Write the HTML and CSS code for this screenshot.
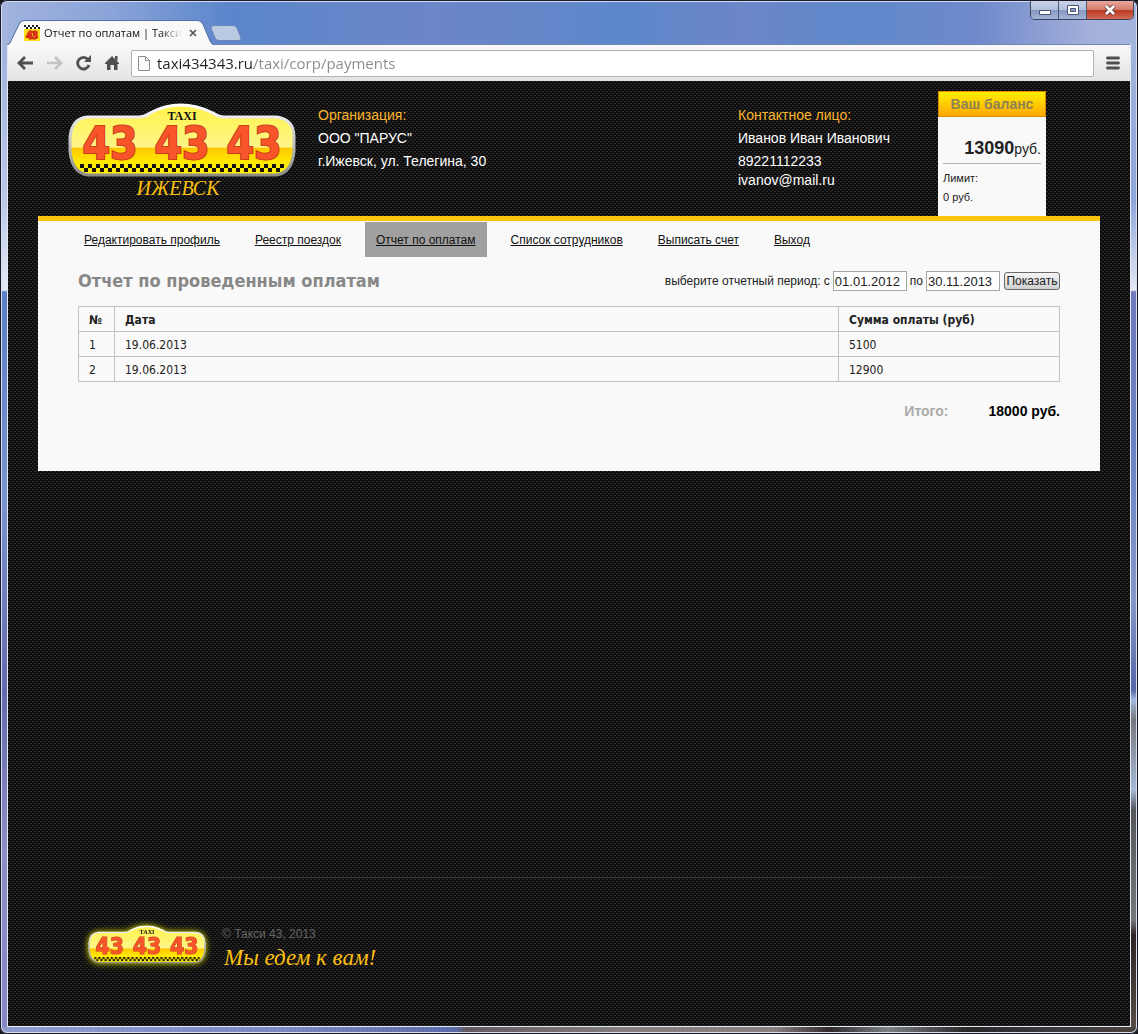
FILE: index.html
```
<!DOCTYPE html>
<html lang="ru">
<head>
<meta charset="utf-8">
<meta name="viewport" content="width=device-width, initial-scale=1">
<title>Отчет по оплатам | Такси 43</title>
<link rel="stylesheet" href="styles.css">
</head>
<body>
<svg class="defs" aria-hidden="true">
  <defs>
    <linearGradient id="plate" x1="0" y1="0" x2="0" y2="1">
      <stop offset="0" stop-color="#fff04a"/>
      <stop offset=".3" stop-color="#fff568"/>
      <stop offset=".6" stop-color="#fff58a"/>
      <stop offset=".62" stop-color="#ffc800"/>
      <stop offset=".8" stop-color="#ffe600"/>
      <stop offset="1" stop-color="#fff200"/>
    </linearGradient>
    <linearGradient id="rim" x1="0" y1="0" x2="0" y2="1">
      <stop offset="0" stop-color="#ffffff"/>
      <stop offset=".5" stop-color="#c4c4c4"/>
      <stop offset="1" stop-color="#8d8d86"/>
    </linearGradient>
    <pattern id="checks" x="12" y="61" width="8" height="8" patternUnits="userSpaceOnUse">
      <path d="M0 0h4v4h4v4h-4v-4h-4z" fill="#15120a"/>
    </pattern>
    <symbol id="sign" viewBox="0 0 228 76">
      <path d="M20 14H70Q77 14 82 10Q112 -6 145 10Q150 14 157 14H208Q226 16 226 34V48Q224 70 208 72H20Q4 70 2 48V34Q4 15 20 14Z" fill="url(#plate)" stroke="url(#rim)" stroke-width="3"/>
      <path d="M12 61H216V69H12Z" fill="url(#checks)"/>
      <text class="sign-taxi" x="114" y="17" text-anchor="middle">TAXI</text>
      <g class="sign-number" text-anchor="middle">
        <text x="42" y="56">43</text>
        <text x="114" y="56">43</text>
        <text x="186" y="56">43</text>
      </g>
    </symbol>
  </defs>
</svg>
<div class="frame">
  <header class="titlebar">
    <div class="tab">
      <svg class="tab-shape" viewBox="0 0 208 24" preserveAspectRatio="none" aria-hidden="true"><path d="M0 24Q3 23 4 20L12 4Q14 .5 18 .5H190Q194 .5 196 4L203 20Q205 24 208 24" fill="#f9f9f9" stroke="#5671a6" stroke-width="1"/></svg>
      <svg class="favicon" width="16" height="16" viewBox="0 0 16 16" aria-hidden="true">
        <path d="M0 4H16V16H0Z" fill="#ffdf1c"/>
        <path d="M0 0H16V4H0Z" fill="#fff"/>
        <path d="M0 0h2v2h2v-2h2v2h2v-2h2v2h2v-2h2v2h2v2h-2v-2h-2v2h-2v-2h-2v2h-2v-2h-2v2h-2v-2h-2z" fill="#222"/>
        <text x="8" y="14" text-anchor="middle">43</text>
      </svg>
      <span class="tab-title">Отчет по оплатам | Такси 43</span>
      <button class="tab-close" type="button" aria-label="Закрыть вкладку"><svg width="8" height="8" viewBox="0 0 8 8"><path d="M1 1L7 7M7 1L1 7" stroke="#555" stroke-width="1.7"/></svg></button>
    </div>
    <button class="new-tab" type="button" aria-label="Новая вкладка"><svg width="32" height="16" viewBox="0 0 32 16"><path d="M1 3Q1 .5 4 .5H23Q26 .5 27 3L31 13Q31 15.500 29 15.500H9Q6 15.500 5 13Z" fill="#b9cae3" stroke="#6b86bb"/></svg></button>
    <div class="window-buttons">
      <button class="minimize" type="button" aria-label="Свернуть"><svg width="14" height="12" viewBox="0 0 14 12"><path d="M1.500 6.500H12.500V10.500H1.500Z" fill="#fff" stroke="#4a5672"/></svg></button>
      <button class="maximize" type="button" aria-label="Развернуть"><svg width="14" height="12" viewBox="0 0 14 12"><path d="M1.500 1.500H12.500V10.500H1.500Z" fill="#fff" stroke="#4a5672"/><path d="M4.500 4.500H9.500V7.500H4.500Z" fill="#8d9dc0" stroke="#4a5672"/></svg></button>
      <button class="close" type="button" aria-label="Закрыть"><svg width="14" height="12" viewBox="0 0 14 12"><path d="M3 2L11 10M11 2L3 10" stroke="#5a3a44" stroke-width="4.500"/><path d="M3 2L11 10M11 2L3 10" stroke="#fff" stroke-width="2.600"/></svg></button>
    </div>
  </header>

  <div class="view">
    <div class="toolbar">
      <button type="button" aria-label="Назад"><svg width="17" height="16" viewBox="0 0 17 16"><path d="M8 2L2 8L8 14M2 8H16" fill="none" stroke="#4f4f4f" stroke-width="2.800"/></svg></button>
      <button type="button" aria-label="Вперед" disabled><svg width="17" height="16" viewBox="0 0 17 16"><path d="M9 2L15 8L9 14M15 8H1" fill="none" stroke="#c3c3c3" stroke-width="2.600"/></svg></button>
      <button type="button" aria-label="Обновить"><svg width="17" height="16" viewBox="0 0 17 16"><path d="M13 4.500A5.800 5.800 0 1 0 14 10" fill="none" stroke="#4f4f4f" stroke-width="2.800"/><path d="M16 0V7H9Z" fill="#4f4f4f"/></svg></button>
      <button type="button" aria-label="Домой"><svg width="17" height="16" viewBox="0 0 17 16"><path d="M8 1L15 8V9H13.500V15H10V10H6.500V15H3V9H1V8ZM11 1H13.500V6L11 4Z" fill="#4f4f4f"/></svg></button>
      <label class="address">
        <svg width="12" height="15" viewBox="0 0 12 15" aria-hidden="true"><path d="M.5 .5H7.500L11.500 4.500V14.500H.5ZM7.500 .5V4.500H11.500" fill="#fafafa" stroke="#8d8d8d"/></svg>
        <input type="text" aria-label="Адрес" value="taxi434343.ru/taxi/corp/payments">
      </label>
      <button class="menu" type="button" aria-label="Меню"><svg width="14" height="14" viewBox="0 0 14 14"><path d="M1.500 2H12.500M1.500 7H12.500M1.500 12H12.500" stroke="#4f4f4f" stroke-width="2.800" stroke-linecap="round"/></svg></button>
    </div>

    <div class="page">
      <div class="header">
        <a class="logo" href="#">
          <svg class="logo-sign" viewBox="0 0 228 76" role="img" aria-label="TAXI 43 43 43"><use href="#sign"/></svg>
          <span class="logo-city">ИЖЕВСК</span>
        </a>
        <div class="info organization">
          <h2>Организация:</h2>
          <p>ООО "ПАРУС"</p>
          <p>г.Ижевск, ул. Телегина, 30</p>
        </div>
        <div class="info contact">
          <h2>Контактное лицо:</h2>
          <p>Иванов Иван Иванович</p>
          <p>89221112233<br>ivanov@mail.ru</p>
        </div>
        <div class="balance">
          <h2>Ваш баланс</h2>
          <p class="balance-sum"><b>13090</b>руб.</p>
          <p class="balance-limit">Лимит:<br>0 руб.</p>
        </div>
      </div>

      <main class="content">
        <nav class="nav">
          <a href="#">Редактировать профиль</a>
          <a href="#">Реестр поездок</a>
          <a class="active" href="#">Отчет по оплатам</a>
          <a href="#">Список сотрудников</a>
          <a href="#">Выписать счет</a>
          <a href="#">Выход</a>
        </nav>
        <div class="report">
          <div class="report-head">
            <h1>Отчет по проведенным оплатам</h1>
            <form class="period">
              <label for="from">выберите отчетный период: с</label>
              <input id="from" type="text" value="01.01.2012">
              <label for="to">по</label>
              <input id="to" type="text" value="30.11.2013">
              <button type="button">Показать</button>
            </form>
          </div>
          <table>
            <thead><tr><th class="col-number">№</th><th>Дата</th><th class="col-sum">Сумма оплаты (руб)</th></tr></thead>
            <tbody>
              <tr><td>1</td><td>19.06.2013</td><td>5100</td></tr>
              <tr><td>2</td><td>19.06.2013</td><td>12900</td></tr>
            </tbody>
          </table>
          <p class="total"><span>Итого:</span><b>18000 руб.</b></p>
        </div>
      </main>

      <footer class="footer">
        <svg class="footer-sign" viewBox="0 0 228 76" role="img" aria-label="TAXI 43 43 43"><use href="#sign"/></svg>
        <div>
          <p class="copyright">© Такси 43, 2013</p>
          <p class="slogan">Мы едем к вам!</p>
        </div>
      </footer>
    </div>
  </div>
</div>
</body>
</html>
```
FILE: styles.css
```
* { box-sizing: border-box; }
body, h1, h2, p { margin: 0; }
body {
  background: #15151c;
  color: #222;
  font: 12px/16px "Liberation Sans", Arial, sans-serif;
}
button { font: inherit; padding: 0; border: 0; background: none; }
svg { display: block; }
.defs { position: absolute; width: 0; height: 0; }

/* window frame */
.frame {
  display: flex;
  flex-direction: column;
  min-height: 100vh;
  padding: 0 7px 7px;
  border-radius: 7px;
  box-shadow: inset 0 0 0 1px #1b1c2a, inset 0 0 0 2px #d5def0;
  background:
    linear-gradient(90deg, #8f9cd0, #7c86c0 25%, #5c6ba8 40%, #615a60 41%, #85807f 55%, #8b7f80 68%, #302a2c 73%, #7b8087 78%, #2b2627 85%, #3a3a42 92%, #4b423c) bottom / 100% 7px no-repeat,
    linear-gradient(#a3b4dd 44px, #b9c7e8 200px, #e3e8f4 290px, #5b7fc6 292px, #7a94cd 500px, #6669ae 690px, #8b8fc4 850px, #8486c6) left / 8px 100% no-repeat,
    linear-gradient(#a3b4dd 44px, #8fa6da 200px, #e3e8f4 290px, #6f78bb 292px, #6a83c4 450px, #8698c9 600px, #5865a6 690px, #a3b9de 700px, #77787f 720px, #a5b9d6 790px, #55565d 810px, #75777f 920px, #2c2424 935px, #5b4f4b) right / 8px 100% no-repeat,
    linear-gradient(90deg, #a0b3de, #8aa3d8 10%, #5b86cb 20%, #6c86c8 38%, #5d87cb 55%, #6c86c8 65%, #5f88cb 75%, #6f8acb 86%, #a5b0db 96%, #a4b5de);
}
.titlebar {
  display: flex;
  align-items: flex-end;
  height: 44px;
}
.tab {
  position: relative;
  display: flex;
  align-items: center;
  width: 208px;
  height: 25px;
  margin-bottom: -1px;
  padding: 0 16px 0 17px;
}
.tab-shape { position: absolute; inset: 0; width: 100%; height: 100%; }
.favicon, .tab-title, .tab-close { position: relative; }
.favicon { flex: none; }
.favicon text { font: 800 10px "Open Sans", sans-serif; fill: #e8301c; stroke: #a51508; stroke-width: 1px; paint-order: stroke; }
.tab-title {
  flex: 1;
  margin-left: 4px;
  overflow: hidden;
  white-space: nowrap;
  color: #111;
  font: 11px/24px "Open Sans", "Noto Sans", sans-serif;
  -webkit-mask-image: linear-gradient(90deg, #000 84%, transparent);
  mask-image: linear-gradient(90deg, #000 84%, transparent);
}
.tab-close { margin: 0 2px 0 7px; }
.new-tab { margin: 0 0 3px -5px; }
.window-buttons {
  display: flex;
  align-self: flex-start;
  margin: 1px -3px 0 auto;
  border: 1px solid #3a4560;
  border-top: 0;
  border-radius: 0 0 5px 5px;
  overflow: hidden;
}
.window-buttons button {
  display: flex;
  align-items: center;
  justify-content: center;
  width: 28px;
  height: 18px;
  border-right: 1px solid #4a5672;
  background: linear-gradient(#c9d2e8, #b2bfdc 50%, #8698c2 52%, #a2b3d8);
}
.window-buttons .close {
  width: 46px;
  border-right: 0;
  background: linear-gradient(#e8a99d, #d67b69 48%, #b93a22 52%, #d26a54);
}

/* browser toolbar */
.view {
  flex: 1;
  display: flex;
  flex-direction: column;
  border: 1px solid #e4e9f4;
  border-top: 0;
}
.toolbar {
  display: flex;
  align-items: center;
  gap: 12px;
  height: 37px;
  padding: 0 10px 0 9px;
  border-top: 1px solid #6f84b4;
  background: linear-gradient(#f9f9f9, #e3e3e3);
}
.address {
  flex: 1;
  display: flex;
  align-items: center;
  gap: 7px;
  height: 27px;
  padding: 0 6px;
  margin-left: -2px;
  border: 1px solid #b2b2b2;
  border-radius: 2px;
  background: #fff;
}
.address input {
  flex: 1;
  min-width: 0;
  height: 25px;
  padding: 0;
  border: 0;
  outline: 0;
  font: 15px/25px "Open Sans", "Noto Sans", sans-serif;
  color: transparent;
  background: linear-gradient(90deg, #222 97px, #8a8a8a 97px);
  -webkit-background-clip: text;
  background-clip: text;
}

/* site */
.page {
  flex: 1;
  display: flex;
  flex-direction: column;
  padding: 10px 30px 0;
  background: url("data:image/svg+xml,%3Csvg xmlns='http://www.w3.org/2000/svg' width='4' height='4'%3E%3Cpath d='M0 0h4v4H0z' fill='%230a0a0a'/%3E%3Cpath d='M0 0h2v1H0zM2 2h2v1H2z' fill='%232c2c2c'/%3E%3Cpath d='M0 1h2v1H0zM2 3h2v1H2z' fill='%23161616'/%3E%3C/svg%3E");
}
.header {
  display: flex;
  min-height: 125px;
  padding: 0 54px 0 30px;
}
.logo {
  width: 228px;
  margin-right: 22px;
  padding-top: 12px;
  text-decoration: none;
}
.logo-sign { width: 228px; height: 76px; }
.sign-taxi { font: bold 12px "Liberation Serif", serif; fill: #111; }
.sign-number { font: bold 44px "DejaVu Sans Condensed", sans-serif; fill: #f8562a; stroke: #c8401a; stroke-width: 2px; paint-order: stroke; }
.logo-city {
  display: block;
  padding-right: 8px;
  color: #fdc010;
  font: italic 20px/18px "Liberation Serif", serif;
  text-align: center;
}
.info {
  padding-top: 13px;
  color: #fff;
  font-size: 14px;
  line-height: 19px;
}
.info h2 { margin-bottom: 3px; color: #fdb52a; font: inherit; line-height: 22px; }
.info p { margin-bottom: 4px; }
.organization { flex: 1; }
.contact { width: 200px; }
.balance {
  width: 108px;
  background: #f9f9f9;
}
.balance h2 {
  border: 1px solid #e08a00;
  background: linear-gradient(#ffee00, #ffa800);
  color: #8d8252;
  font-size: 14px;
  line-height: 24px;
  text-align: center;
}
.balance-sum {
  margin: 0 5px;
  padding: 18px 0 1px;
  border-bottom: 1px solid #b5b5b5;
  font-size: 14px;
  line-height: 26px;
  text-align: right;
}
.balance-sum b { font-size: 18px; }
.balance-limit { padding: 5px 5px 0; font-size: 11px; line-height: 19px; }

.content {
  min-height: 255px;
  border-top: 5px solid #fbc510;
  background: #f9f9f9;
}
.nav { display: flex; flex-wrap: wrap; gap: 13px; padding: 1px 35px 0; }
.nav a { padding: 1px 11px 0; color: #111; line-height: 34px; }
.nav .active { background: #a0a0a0; }
.report { padding: 10px 40px 50px; }
.report-head {
  display: flex;
  align-items: center;
  justify-content: space-between;
  height: 28px;
  margin-bottom: 11px;
}
h1 {
  color: #888;
  font: bold 18px/28px "DejaVu Sans Condensed", Tahoma, sans-serif;
}
.period { display: flex; align-items: center; gap: 3px; }
.period input {
  width: 74px;
  height: 20px;
  padding: 0 1px;
  border: 1px solid #a5a5a5;
  background: #fff;
  color: #222;
  font: 13px/18px "Liberation Sans", Arial, sans-serif;
}
.period button {
  width: 56px;
  height: 18px;
  margin-left: 1px;
  border: 1px solid #6a6a6a;
  border-radius: 3px;
  background: linear-gradient(#f4f4f4, #d0d0d0);
  color: #222;
}
table {
  width: 100%;
  border-collapse: collapse;
  color: #222;
  font: 12px/16px "DejaVu Sans Condensed", Tahoma, sans-serif;
}
th, td { height: 25px; padding: 2px 10px 0; border: 1px solid #c2c2c2; text-align: left; }
.col-number { width: 36px; }
.col-sum { width: 221px; }
.total {
  display: flex;
  justify-content: flex-end;
  gap: 40px;
  margin-top: 19px;
  color: #000;
  font-size: 14px;
  font-weight: bold;
  line-height: 20px;
}
.total span { color: #aaa; }

.footer {
  display: flex;
  gap: 16px;
  height: 149px;
  margin: auto 60px 0;
  padding: 48px 0 0;
  background: linear-gradient(90deg, transparent, #3c3c3c 15%, #3c3c3c 85%, transparent) top / 100% 1px no-repeat;
}
.footer-sign { width: 118px; height: 40px; margin-left: -10px; filter: drop-shadow(0 0 3px #e6e600); }
.copyright { padding-top: 1px; color: #666; }
.slogan { padding-left: 2px; color: #fdc010; font: italic 23px/32px "Liberation Serif", serif; }
```
